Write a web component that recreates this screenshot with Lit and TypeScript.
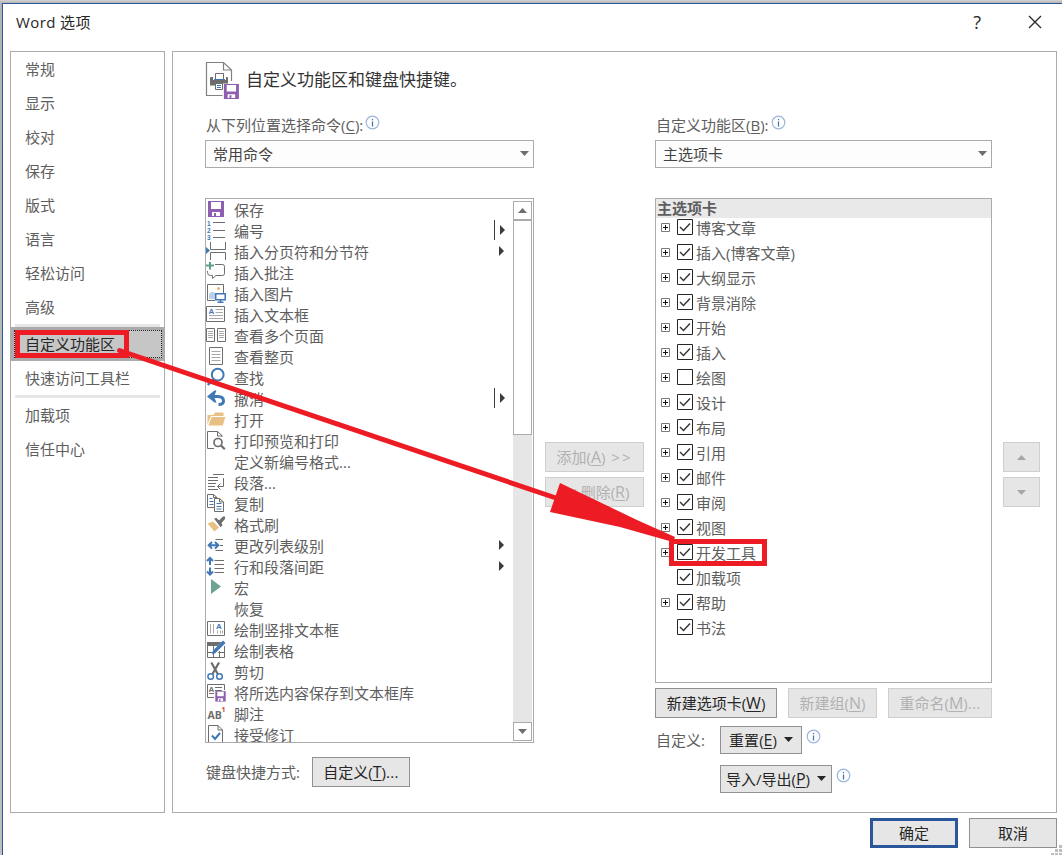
import { LitElement, html, svg, css, nothing } from 'lit';
import { customElement, property } from 'lit/decorators.js';
import { classMap } from 'lit/directives/class-map.js';

const floppy = svg`
  <path fill="#8e5fb0" d="M2 1h16v16H2z"/>
  <path fill="#fff" d="M5 2h10v7H5zM6 12h8v4H6z"/>
  <path fill="#8e5fb0" d="M8 13h2v4H8z"/>`;

// every glyph is drawn on a 20 x 21 grid, the size of a list row
const icons = {
  save: floppy,
  numbering: svg`
    <g class="num"><text x="1" y="4.5">1</text><text x="1" y="11.5">2</text><text x="1" y="18.5">3</text></g>
    <path class="g" d="M7 1.500h12M7 9.500h12M7 16.500h12"/>`,
  pageBreak: svg`
    <path class="g" d="M4.500 0v7.500h15V0M4.500 18v-7.500h15V18"/>
    <path fill="#3f78b5" d="M0 5l4 3.500-4 3.500z"/>`,
  comment: svg`
    <path class="g" d="M9 1.500h7.500q2 0 2 2v7q0 2-2 2H10l-3.500 3v-3h-2q-3 0-3-3V8"/>
    <path fill="none" stroke="#5f9f86" stroke-width="2" d="M0 2.500h8M4-1v7.500"/>`,
  picture: svg`
    <path class="g" d="M9 16.500H1.500v-16h16V9"/>
    <circle cx="12.500" cy="4.500" r="1.500" fill="#e9b266"/>
    <path fill="#bcd0e6" d="M3 15V10q3-4 6-1v6z"/>
    <path fill="#fff" stroke="#3f78b5" stroke-width="1.500" d="M9.700 9.700h9.500v6H9.700zM14.500 16v2M11.500 18.200h6"/>`,
  textBox: svg`
    <path class="g" d="M.5 1.500h18v15H.5z"/>
    <text class="a" x="2.500" y="9">A</text>
    <path class="t" d="M9.500 4.500H17M9.500 7.500H17M3 10.500h14M3 13.500h14"/>`,
  pages: svg`
    <path class="g" d="M.5 2.500h8v13h-8zM11.500 2.500h8v13h-8z"/>
    <path class="t" d="M2 5.500h5M2 7.500h5M2 9.500h5M2 11.500h5M13 5.500h5M13 7.500h5M13 9.500h5M13 11.500h5"/>`,
  page: svg`
    <path class="g" d="M3.500.5h13v17h-13z"/>
    <path class="t" d="M5.500 4.500h9M5.500 7.500h9M5.500 10.500h9M5.500 13.500h9"/>`,
  find: svg`
    <circle cx="11.700" cy="6.700" r="5.900" fill="none" stroke="#3f78b5" stroke-width="2"/>
    <path stroke="#3f78b5" stroke-width="2.500" d="M7.500 11L1.800 17"/>`,
  undo: svg`
    <path fill="none" stroke="#3f78b5" stroke-width="3" d="M4 7.500h8q5.500 0 5.500 4.500 0 3.500-5 3.500"/>
    <path fill="#3f78b5" d="M1 7.500L8.500 1.500h2L8 7.500l2.500 6h-2z"/>`,
  open: svg`
    <path fill="#e9c083" d="M1.500 15V5h6l1.500-2.500h8.500V6H5z"/>
    <path fill="none" stroke="#fff" stroke-width=".8" d="M2 15L5.300 6.500H18"/>
    <path fill="#e9c083" d="M5.700 7H19.300l-2.500 8.500H2.300z"/>`,
  preview: svg`
    <path class="g" d="M8 17.500H1.500V.5h10l4.500 4V6M11.500.5v4.500H16"/>
    <circle cx="12" cy="11.500" r="4" fill="#fff" stroke="#6d6d6d" stroke-width="1.700"/>
    <path stroke="#6d6d6d" stroke-width="2.200" d="M15 14.500l3.800 3.700"/>`,
  paragraph: svg`
    <path class="g" d="M7 1.500h11M2 4.500h10M2 7.500h10M2 10.500h8M2 13.500h7M2 16.500h10M17.500 5v8.500H12M14.500 10.500l-3 3 3 3"/>`,
  copy: svg`
    <path class="w" d="M1.500.5h6l3.500 3v10H1.500zM7.500.5v3H11"/>
    <path class="b" d="M3.500 4.500h3M3.500 7.500h4M3.500 10.500h4"/>
    <path class="w" d="M8.500 4.500h5l4 3.500v9.500h-9zM13.500 4.500V8h4"/>
    <path class="b" d="M10.500 9.500h5M10.500 12.500h5M10.500 15h5"/>`,
  painter: svg`
    <path fill="#e9c083" d="M1.500 8.500L7 6.500l6 6-4.500 4z"/>
    <path fill="#6d6d6d" d="M8 3.500l2.500-.5 2.500 2.500L17 1.500h2v2.500l-3.500 4 1 2.500-2 1.500z"/>`,
  level: svg`
    <path class="g" d="M9.500 3.500H17M14 9.500h3M9.500 14.500H17"/>
    <path fill="none" stroke="#3f78b5" stroke-width="2" d="M3 9.300h9M6 6L2.700 9.300 6 12.600M9 6l3.300 3.300-3.300 3.300"/>`,
  spacing: svg`
    <path class="g" d="M8.500 3.500H18M8.500 7.500H18M8.500 11.500H18M8.500 15.500H18"/>
    <path fill="none" stroke="#3f78b5" stroke-width="2" d="M4 1v7M1 4l3-3 3 3M4 10.500v7M1 14.500l3 3 3-3"/>`,
  macro: svg`<path fill="#6ea392" d="M5 1l10 7.500L5 16z"/>`,
  verticalBox: svg`
    <path class="g" d="M1.500 1.500h17v14h-17z"/>
    <path class="t" d="M4.500 4v9.500M7.500 4v9.500M11.500 10.500v3M14.500 10.500v3M16.500 10.500v3"/>
    <text class="a" x="10" y="9">A</text>`,
  table: svg`
    <path class="g" d="M1.500 1.500h17v15h-17zM1.500 11.500h17M7.500 4v12M13.500 9v7.500"/>
    <path fill="#6d6d6d" d="M1 1h15l-3 4H1z"/>
    <path stroke="#fff" stroke-width="5" d="M18.500 1.500L8.500 11.500"/>
    <path fill="#3f78b5" d="M17-.5l2.500 2.500L9.500 12 6 13.500 7 9.500z"/>`,
  cut: svg`
    <path stroke="#6d6d6d" stroke-width="2.200" d="M5.300.5l6.500 11.500M13 .5L6.500 12"/>
    <g fill="none" stroke="#3f78b5" stroke-width="1.500"><circle cx="4.700" cy="14.500" r="2.800"/><circle cx="13.500" cy="14.500" r="2.800"/></g>`,
  saveBox: svg`
    <path class="g" d="M8 14.500H1.500v-13h17V7M9 4.500h7M9 7.500h7M3 10.500h5"/>
    <text class="a grey" x="2.500" y="8.500">A</text>
    <g transform="translate(8 7.500) scale(.65)">${floppy}</g>`,
  footnote: svg`
    <text class="ab" x="1.500" y="15">AB</text>
    <text class="one" x="15.500" y="7.500">1</text>`,
  accept: svg`
    <path class="g" d="M2.500 18V.5h9.500l4.500 4.500v13M12 .5V5h4.500"/>
    <path fill="none" stroke="#3f78b5" stroke-width="2" d="M6 10.500l3 3.500 5-6"/>`,
};

type IconName = keyof typeof icons;

interface Command {
  label: string;
  icon?: IconName;
  more?: 'menu' | 'split';
}

const commands: Command[] = [
  { label: '保存', icon: 'save' },
  { label: '编号', icon: 'numbering', more: 'split' },
  { label: '插入分页符和分节符', icon: 'pageBreak', more: 'menu' },
  { label: '插入批注', icon: 'comment' },
  { label: '插入图片', icon: 'picture' },
  { label: '插入文本框', icon: 'textBox' },
  { label: '查看多个页面', icon: 'pages' },
  { label: '查看整页', icon: 'page' },
  { label: '查找', icon: 'find' },
  { label: '撤消', icon: 'undo', more: 'split' },
  { label: '打开', icon: 'open' },
  { label: '打印预览和打印', icon: 'preview' },
  { label: '定义新编号格式...' },
  { label: '段落...', icon: 'paragraph' },
  { label: '复制', icon: 'copy' },
  { label: '格式刷', icon: 'painter' },
  { label: '更改列表级别', icon: 'level', more: 'menu' },
  { label: '行和段落间距', icon: 'spacing', more: 'menu' },
  { label: '宏', icon: 'macro' },
  { label: '恢复' },
  { label: '绘制竖排文本框', icon: 'verticalBox' },
  { label: '绘制表格', icon: 'table' },
  { label: '剪切', icon: 'cut' },
  { label: '将所选内容保存到文本框库', icon: 'saveBox' },
  { label: '脚注', icon: 'footnote' },
  { label: '接受修订', icon: 'accept' },
];

const tabs = [
  { label: '博客文章' },
  { label: '插入(博客文章)' },
  { label: '大纲显示' },
  { label: '背景消除' },
  { label: '开始' },
  { label: '插入' },
  { label: '绘图', off: true },
  { label: '设计' },
  { label: '布局' },
  { label: '引用' },
  { label: '邮件' },
  { label: '审阅' },
  { label: '视图' },
  { label: '开发工具' },
  { label: '加载项', leaf: true },
  { label: '帮助' },
  { label: '书法', leaf: true },
];

const sections = [
  ['常规', '显示', '校对', '保存', '版式', '语言', '轻松访问', '高级'],
  ['自定义功能区', '快速访问工具栏'],
  ['加载项', '信任中心'],
];

const arrow = (dir: 'up' | 'down') => html`
  <svg class="arrow" width="9" height="5" viewBox="0 0 9 5">
    <path d=${dir === 'up' ? 'M0 5h9L4.500 0z' : 'M0 0h9L4.500 5z'} fill="currentColor"/>
  </svg>`;

const info = html`
  <svg class="info" width="15" height="15" viewBox="0 0 15 15">
    <circle cx="7.500" cy="7.500" r="6.300" fill="#fbfdff" stroke="#9db7da" stroke-width="1.200"/>
    <path d="M7.500 6.500v5M7.500 4v1.300" stroke="#4c6e9e" stroke-width="1.200"/>
  </svg>`;

@customElement('option-button')
export class OptionButton extends LitElement {
  @property({ type: String }) label = '';
  @property({ type: String }) key = '';
  @property({ type: String }) tail = '';
  @property({ type: Boolean, reflect: true }) disabled = false;
  @property({ type: Boolean, reflect: true }) primary = false;

  static styles = css`
    :host {
      display: flex;
      align-items: center;
      justify-content: center;
      box-sizing: border-box;
      height: 30px;
      border: 1px solid #919191;
      background: #e6e6e6;
      color: #262626;
      white-space: pre;
      line-height: 20px;
    }
    :host([disabled]) {
      border-color: #cfcfcf;
      color: #b1b1b1;
    }
    :host([primary]) {
      border: 3px solid #2b579a;
    }
    u {
      font-size: 16px;
      text-underline-offset: 2px;
      text-decoration-thickness: 1px;
    }
    .tail {
      letter-spacing: var(--tail-spacing, 0.3px);
    }
  `;

  render() {
    return html`<span>${this.label}${this.key ? html`(<u>${this.key}</u>)` : nothing}<span class="tail">${this.tail}</span></span><slot></slot>`;
  }
}

@customElement('app-root')
export class AppRoot extends LitElement {
  static styles = css`
    :host {
      display: block;
      position: relative;
      box-sizing: border-box;
      width: 1062px;
      height: 855px;
      padding: 3px 0 0 2px;
      overflow: hidden;
      background: linear-gradient(#d2d2d2, #b4b4b4 3px, #c0c0c0);
      font: 15px/20px "Open Sans", "Noto Sans CJK SC", sans-serif;
      color: #5e5e5e;
    }
    * {
      box-sizing: border-box;
    }
    svg {
      display: block;
      flex: none;
    }
    u {
      text-underline-offset: 2px;
      text-decoration-thickness: 1px;
    }
    .window {
      height: 852px;
      padding: 0 5px 0 7px;
      border: solid #2b579a;
      border-width: 1px 0 0 1px;
      background: #fff;
    }
    .titlebar {
      display: flex;
      align-items: center;
      height: 47px;
      padding: 0 15px 11px 6px;
      color: #262626;
    }
    .titlebar .name {
      flex: 1;
      letter-spacing: 0.4px;
    }
    .titlebar .help {
      margin-right: 47px;
      font-size: 18px;
    }
    .panes {
      display: flex;
      gap: 7px;
      height: 762px;
    }
    .sidebar {
      width: 155px;
      border: 1px solid #ababab;
    }
    .section + .section::before {
      content: "";
      display: block;
      height: 3px;
      margin: 0 4px;
      background: #e6e6e6;
    }
    .nav {
      display: flex;
      align-items: center;
      height: 34px;
      padding-left: 14px;
    }
    .nav.selected {
      padding: 3px 2px 3px 3px;
      background: #ababab;
      color: #262626;
    }
    .nav.selected span {
      flex: 1;
      height: 28px;
      padding-left: 10px;
      border: 1px dotted #262626;
      background: #c6c6c6;
      line-height: 26px;
    }
    .main {
      width: 885px;
      padding: 8px 0 0 32px;
      border: 1px solid #ababab;
    }
    .heading {
      display: flex;
      align-items: center;
      gap: 6px;
      height: 40px;
      color: #333;
      font-size: 17px;
    }
    .columns {
      display: flex;
      gap: 11px;
    }
    .left {
      width: 329px;
    }
    .right {
      width: 337px;
    }
    .caption {
      display: flex;
      height: 40px;
      padding: 15px 0 0 1px;
      gap: 2px;
    }
    .select {
      display: flex;
      align-items: center;
      justify-content: space-between;
      height: 28px;
      margin-bottom: 30px;
      padding: 0 4px 0 7px;
      border: 1px solid #ababab;
      background: #fdfdfd;
      color: #444;
    }
    .arrow {
      color: #6e6e6e;
    }
    .select .arrow {
      margin-top: -2px;
    }
    .commands {
      display: flex;
      height: 545px;
      padding: 1px 1px 0 0;
      border: 1px solid #ababab;
    }
    .rows {
      flex: 1;
      height: 542px;
      overflow: hidden;
    }
    .row {
      display: flex;
      height: 21px;
    }
    .row:last-child {
      height: 17px;
    }
    .row .icon {
      overflow: visible;
    }
    .row .text {
      flex: 1;
      padding-left: 8px;
      line-height: 21px;
    }
    .more {
      display: flex;
      align-items: center;
      height: 18px;
      margin-right: 9px;
      color: #3b3b3b;
    }
    .more.split {
      height: 20px;
      gap: 5px;
      margin: -1px 8px 0 0;
      border-left: 1px solid #3b3b3b;
      padding-left: 5px;
    }
    .g { fill: none; stroke: #6d6d6d; }
    .w { fill: #fff; stroke: #6d6d6d; }
    .b { fill: none; stroke: #3f78b5; }
    .t { fill: none; stroke: #a9a9a9; }
    .num, .a { font: bold 6.5px "Liberation Sans", sans-serif; fill: #3f78b5; }
    .a { font-size: 8px; }
    .grey { fill: #6d6d6d; }
    .ab { font: bold 10.5px "Open Sans", sans-serif; fill: #6d6d6d; }
    .one { font: bold 7px "Open Sans", sans-serif; fill: #d0492c; }
    .scroll {
      display: flex;
      flex-direction: column;
      width: 19px;
      height: 540px;
      margin-top: 1px;
      background: #e6e6e6;
    }
    .step,
    .thumb {
      display: flex;
      align-items: center;
      justify-content: center;
      height: 19px;
      border: 1px solid #ababab;
      background: #fff;
    }
    .thumb {
      height: 215px;
      margin-bottom: auto;
    }
    .shortcut {
      display: flex;
      align-items: center;
      gap: 12px;
      margin-top: 14px;
      padding-left: 1px;
    }
    .shortcut option-button {
      width: 98px;
    }
    .transfer {
      --tail-spacing: 2px;
      display: flex;
      flex-direction: column;
      gap: 5px;
      width: 99px;
      padding-top: 342px;
    }
    .order {
      display: flex;
      flex-direction: column;
      gap: 5px;
      width: 37px;
      padding-top: 342px;
    }
    .order .arrow {
      color: #a6a6a6;
    }
    .tree {
      height: 485px;
      border: 1px solid #ababab;
    }
    .tree-head {
      height: 19px;
      padding-left: 1px;
      background: #e9e9e9;
      font-weight: bold;
      line-height: 19px;
    }
    .tab {
      display: flex;
      height: 25px;
      padding: 1px 0 0 5px;
    }
    .expander {
      margin: 4px 7px 0 0;
    }
    .leaf .expander {
      visibility: hidden;
    }
    .tab .label {
      padding-left: 3px;
      line-height: 19px;
    }
    .actions {
      display: flex;
      gap: 11px;
      margin: 5px 0 8px;
    }
    .new-tab { width: 122px; }
    .new-group { width: 89px; }
    .rename { width: 104px; }
    .custom {
      display: grid;
      grid-template-columns: 64px auto;
      row-gap: 11px;
      padding-left: 1px;
      line-height: 28px;
    }
    .pick {
      display: flex;
      gap: 4px;
    }
    .pick option-button {
      height: 28px;
    }
    .pick .arrow {
      margin: -2px 0 0 7px;
      color: #262626;
    }
    .pick .info {
      margin-top: 3px;
    }
    .reset { width: 82px; }
    .transport { width: 112px; }
    .footer {
      display: flex;
      justify-content: flex-end;
      gap: 11px;
      padding-top: 5px;
    }
    .footer option-button {
      width: 88px;
    }
    .overlay {
      position: absolute;
      left: 0;
      top: 0;
    }
    .grip {
      position: absolute;
      right: 0;
      bottom: 0;
    }
  `;

  renderCommand(c: Command) {
    return html`
      <div class="row">
        <svg class="icon" width="20" height="21" viewBox="0 0 20 21">${c.icon ? icons[c.icon] : nothing}</svg>
        <span class="text">${c.label}</span>
        ${c.more
          ? html`<span class=${classMap({ more: true, split: c.more === 'split' })}>
              <svg width="5" height="10" viewBox="0 0 5 10"><path d="M0 0l5 5-5 5z" fill="currentColor"/></svg>
            </span>`
          : nothing}
      </div>`;
  }

  renderTab(t: { label: string; off?: boolean; leaf?: boolean }) {
    return html`
      <div class=${classMap({ tab: true, leaf: !!t.leaf })}>
        <svg class="expander" width="9" height="9" viewBox="0 0 9 9">
          <path d="M.5.5h8v8h-8z" fill="#fff" stroke="#7a7a7a"/>
          <path d="M2 4.500h5M4.500 2v5" stroke="#111"/>
        </svg>
        <svg width="16" height="16" viewBox="0 0 16 16">
          <path d="M.5.5h15v15H.5z" fill="#fff" stroke="#262626"/>
          ${t.off ? nothing : svg`<path d="M3 8l3.500 3.500L13 4.500" fill="none" stroke="#333" stroke-width="1.400"/>`}
        </svg>
        <span class="label">${t.label}</span>
      </div>`;
  }

  render() {
    return html`
      <div class="window">
        <div class="titlebar">
          <span class="name">Word 选项</span>
          <span class="help">?</span>
          <svg width="14" height="14" viewBox="0 0 14 14">
            <path d="M1 1l12 12M13 1L1 13" stroke="#262626" stroke-width="1.300"/>
          </svg>
        </div>
        <div class="panes">
          <div class="sidebar">
            ${sections.map((s) => html`<div class="section">
              ${s.map((n) => html`<div class=${classMap({ nav: true, selected: n === '自定义功能区' })}><span>${n}</span></div>`)}
            </div>`)}
          </div>
          <div class="main">
            <div class="heading">
              <svg width="35" height="38" viewBox="0 0 35 38">
                <path d="M17.500 34.500H1.500v-33h17L26.500 9v11M18.500 1.500V9h8" fill="#fff" stroke="#808080" stroke-width="1.200"/>
                <path d="M5 17q0-1 1-1h2v3h13v-3h1q1 0 1 1v7.500H5z" fill="#6d6d6d"/>
                <path d="M10.500 12.500h8v6h-8z" fill="#fff" stroke="#6d6d6d"/>
                <path d="M9 18.500h11" stroke="#3f78b5"/>
                <path d="M10.500 22.500h7v6h-7z" fill="#fff" stroke="#6d6d6d"/>
                <path d="M12 24.500h4M12 26.500h4" stroke="#3f78b5"/>
                <path d="M18 22.500h16v15.500H18z" fill="#fff"/>
                <g transform="translate(17 22) scale(.94)">${floppy}</g>
              </svg>
              <span>自定义功能区和键盘快捷键。</span>
            </div>
            <div class="columns">
              <div class="left">
                <div class="caption"><span>从下列位置选择命令(<u>C</u>):</span>${info}</div>
                <div class="select"><span>常用命令</span>${arrow('down')}</div>
                <div class="commands">
                  <div class="rows">${commands.map((c) => this.renderCommand(c))}</div>
                  <div class="scroll">
                    <div class="step">${arrow('up')}</div>
                    <div class="thumb"></div>
                    <div class="step">${arrow('down')}</div>
                  </div>
                </div>
                <div class="shortcut">
                  <span>键盘快捷方式:</span>
                  <option-button label="自定义" key="T" tail="..."></option-button>
                </div>
              </div>
              <div class="transfer">
                <option-button disabled label="添加" key="A" tail=" >>"></option-button>
                <option-button disabled label="<< 删除" key="R"></option-button>
              </div>
              <div class="right">
                <div class="caption"><span>自定义功能区(<u>B</u>):</span>${info}</div>
                <div class="select"><span>主选项卡</span>${arrow('down')}</div>
                <div class="tree">
                  <div class="tree-head">主选项卡</div>
                  ${tabs.map((t) => this.renderTab(t))}
                </div>
                <div class="actions">
                  <option-button class="new-tab" label="新建选项卡" key="W"></option-button>
                  <option-button class="new-group" disabled label="新建组" key="N"></option-button>
                  <option-button class="rename" disabled label="重命名" key="M" tail="..."></option-button>
                </div>
                <div class="custom">
                  <span>自定义:</span>
                  <div class="pick"><option-button class="reset" label="重置" key="E">${arrow('down')}</option-button>${info}</div>
                  <span></span>
                  <div class="pick"><option-button class="transport" label="导入/导出" key="P">${arrow('down')}</option-button>${info}</div>
                </div>
              </div>
              <div class="order">
                <option-button disabled>${arrow('up')}</option-button>
                <option-button disabled>${arrow('down')}</option-button>
              </div>
            </div>
          </div>
        </div>
        <div class="footer">
          <option-button primary label="确定"></option-button>
          <option-button label="取消"></option-button>
        </div>
      </div>
      <svg class="grip" width="11" height="10" viewBox="0 0 11 10">
        <path d="M8 0h3v3H8zM4 4h3v3H4zM8 4h3v3H8zM0 8h3v3H0zM4 8h3v3H4zM8 8h3v3H8z" fill="#bdbdbd"/>
      </svg>
      <svg class="overlay" width="1062" height="855" viewBox="0 0 1062 855">
        <g fill="none" stroke="#ed1c24" stroke-width="5">
          <path d="M17.500 332.500h109v23h-109zM671.500 541.500h93v22h-93z"/>
          <path d="M119.500 350.500L556 498" stroke-linecap="round"/>
        </g>
        <path d="M560 483L637 520 675 537 673 542 620 527 550 512z" fill="#ed1c24"/>
      </svg>
    `;
  }
}
